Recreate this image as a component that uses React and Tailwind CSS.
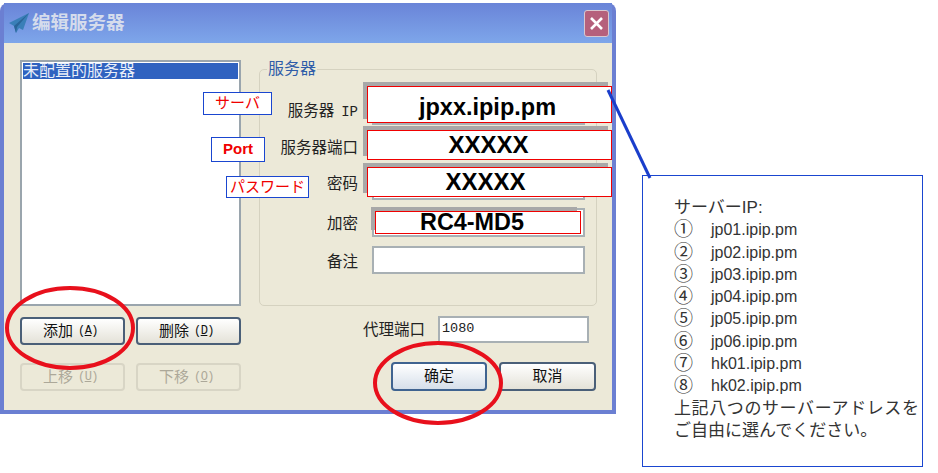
import React from 'react';

const cjk = "font-['Liberation_Sans','Noto_Sans_CJK_SC',sans-serif]";

const fields = [
    { label: '服务器', suffix: 'IP', height: 'h-[35px]', margin: 'mt-[12px]', nudge: 'mt-[7px]' },
    { label: '服务器端口', height: 'h-[27px]', margin: 'mt-[8px]', nudge: 'mt-[3px]' },
    { label: '密码', height: 'h-[30px]', margin: 'mt-[10px]', nudge: '-mt-[3px]' },
    { label: '加密', height: 'h-[29px]', margin: 'mt-[8px]', nudge: 'mt-[3px]' },
    { label: '备注', height: 'h-[28px]', margin: 'mt-[9px]', nudge: 'mt-[3px]' },
];

const servers = ['jp01.ipip.pm', 'jp02.ipip.pm', 'jp03.ipip.pm', 'jp04.ipip.pm', 'jp05.ipip.pm', 'jp06.ipip.pm', 'hk01.ipip.pm', 'hk02.ipip.pm'];
const circled = ['①', '②', '③', '④', '⑤', '⑥', '⑦', '⑧'];

const redBoxes = [
    { text: 'jpxx.ipip.pm', pos: 'left-[367px] top-[86px] w-[245px] h-[37px] pt-[7px] pr-[4px] text-[23.5px]' },
    { text: 'XXXXX', pos: 'left-[367px] top-[130px] w-[245px] h-[30px] pr-[2px] text-[24px]' },
    { text: 'XXXXX', pos: 'left-[367px] top-[167px] w-[245px] h-[30px] pr-[8px] text-[24px]' },
    { text: 'RC4-MD5', pos: 'left-[375px] top-[211px] w-[206px] h-[23px] pr-[12px] text-[23.4px]' },
];

const tags = [
    { text: 'サーバ', pos: 'left-[203px] top-[92px] w-[69px] h-[23px]' },
    { text: 'Port', pos: 'left-[211px] top-[137px] w-[54px] h-[25px] font-bold' },
    { text: 'パスワード', pos: 'left-[226px] top-[176px] w-[83px] h-[22px]' },
];

const WinButton = ({ children, disabled, active, className = '' }) => (
    <div
        className={`flex items-center justify-center rounded-[4px] border-2 text-[15px] ${className} ${
            disabled
                ? 'border-[#d8d5c5] bg-[#ece9d8] text-[#aca899]'
                : active
                  ? 'border-[#3f6390] bg-gradient-to-b from-white to-[#d6dfea] text-[#111]'
                  : 'border-[#4a5f78] bg-gradient-to-b from-white to-[#e4e2d8] text-[#111]'
        }`}
    >
        {children}
    </div>
);

const Hotkey = ({ letter }) => (
    <span className="ml-[5px] font-['Liberation_Mono',monospace] text-[12px] tracking-[-0.5px]">
        (<span className="underline">{letter}</span>)
    </span>
);

const App = () => {
    return (
        <div className={`relative flex h-[473px] w-[938px] overflow-hidden bg-white ${cjk}`}>
            <div className="mt-[3px] h-[411px] w-[616px] shrink-0 rounded-t-[8px] bg-[#6b7fd2] px-[4px] pb-[4px]">
                <div className="flex h-[40px] items-center bg-gradient-to-b from-[#6a84d8] to-[#7ea6ea]">
                    <svg width="22" height="22" viewBox="0 0 22 22" className="ml-[4px]">
                        <path d="M21 1 1 11l5 3 2 7 3-5 4 2Z" fill="#3a7fb8" />
                        <path d="M21 1 6 14l2 7 1-6Z" fill="#2a6498" />
                    </svg>
                    <span className="ml-[2px] text-[18.5px] font-bold text-[#d5dcec]">编辑服务器</span>
                    <div className="mr-[3px] ml-auto flex h-[27px] w-[25px] items-center justify-center rounded-[3px] border border-[#d8c8d0] bg-[#b5607c]">
                        <svg width="15" height="15" viewBox="0 0 15 15">
                            <path d="m2 2 11 11M13 2 2 13" stroke="#fff" strokeWidth="2.6" />
                        </svg>
                    </div>
                </div>
                <div className="flex h-[367px] bg-[#ece9d8] pt-[17px] pl-[16px]">
                    <div className="w-[221px]">
                        <div className="h-[246px] border-2 border-[#9aa5ad] bg-white p-px">
                            <div className="flex h-[16px] items-center bg-[#2f62c0] text-[16px] text-[#e8eef8]">未配置的服务器</div>
                        </div>
                        <div className="mt-[11px] flex justify-between">
                            <WinButton className="h-[28px] w-[105px] pr-[4px]">添加<Hotkey letter="A" /></WinButton>
                            <WinButton className="h-[28px] w-[105px] pr-[4px]">删除<Hotkey letter="D" /></WinButton>
                        </div>
                        <div className="mt-[18px] flex justify-between">
                            <WinButton disabled className="h-[28px] w-[105px] pr-[4px]">上移<Hotkey letter="U" /></WinButton>
                            <WinButton disabled className="h-[28px] w-[105px] pr-[4px]">下移<Hotkey letter="O" /></WinButton>
                        </div>
                    </div>
                    <div className="ml-[18px] w-[338px]">
                        <fieldset className="h-[246px] rounded-[5px] border border-[#d5d2c0] pr-[11px]">
                            <legend className="ml-[7px] px-px text-[16px] leading-[18px] text-[#2f5da8]">服务器</legend>
                            <div className="flex flex-col">
                                {fields.map((field) => (
                                    <div key={field.label} className={`flex items-center justify-end ${field.margin}`}>
                                        <span className={`text-[15.5px] text-[#222] ${field.nudge}`}>
                                            {field.label}
                                            {field.suffix && <span className="ml-[7px] font-['Liberation_Mono',monospace] text-[14px]">{field.suffix}</span>}
                                        </span>
                                        <div className={`ml-[14px] w-[213px] border-2 border-[#a8b0b4] bg-white ${field.height}`} />
                                    </div>
                                ))}
                            </div>
                        </fieldset>
                        <div className="mt-[10px] mr-[8px] flex items-center justify-end">
                            <span className="text-[15.5px] text-[#222]">代理端口</span>
                            <div className="ml-[13px] flex h-[27px] w-[151px] items-center border-2 border-[#a8b0b4] bg-white pl-[2px] font-['Liberation_Mono',monospace] text-[13.5px] text-[#222]">1080</div>
                        </div>
                        <div className="mt-[19px] flex justify-end">
                            <WinButton active className="h-[29px] w-[96px]">确定</WinButton>
                            <WinButton className="mr-px ml-[12px] h-[29px] w-[97px]">取消</WinButton>
                        </div>
                    </div>
                </div>
            </div>

            <div className="mt-[175px] ml-[26px] h-[292px] w-[281px] border border-[#1a46d0] pt-[21px] pl-[31px] font-['Liberation_Sans','Noto_Sans_CJK_JP',sans-serif] text-[17px] leading-[22.3px] text-[#333]">
                <div>サーバーIP:</div>
                {servers.map((server, i) => (
                    <div key={server} className="flex h-[22.3px] items-center">
                        <span className="w-[37px] text-[19px]">{circled[i]}</span>
                        <span className="text-[16px]">{server}</span>
                    </div>
                ))}
                <div className="whitespace-nowrap tracking-[0.6px]">上記八つのサーバーアドレスを</div>
                <div className="whitespace-nowrap">ご自由に選んでください。</div>
            </div>

            {redBoxes.map((box) => (
                <div key={box.pos} className={`absolute flex items-center justify-center border border-[#f00000] bg-white font-bold text-black shadow-[-4px_-4px_0_#a8a8a8] ${box.pos}`}>
                    {box.text}
                </div>
            ))}

            {tags.map((tag) => (
                <div key={tag.text} className={`absolute flex items-center justify-center border border-[#1a46d0] bg-white text-[15px] text-[#f00000] ${tag.pos}`}>
                    {tag.text}
                </div>
            ))}

            <svg className="pointer-events-none absolute top-0 left-0" width="938" height="473">
                <line x1="608" y1="90" x2="650" y2="178" stroke="#1a3ecb" strokeWidth="3" />
                <ellipse cx="70" cy="328" rx="63" ry="40" fill="none" stroke="#e8101c" strokeWidth="4" />
                <ellipse cx="438" cy="383" rx="63" ry="40" fill="none" stroke="#e8101c" strokeWidth="4" />
            </svg>
        </div>
    );
};

export default App;
